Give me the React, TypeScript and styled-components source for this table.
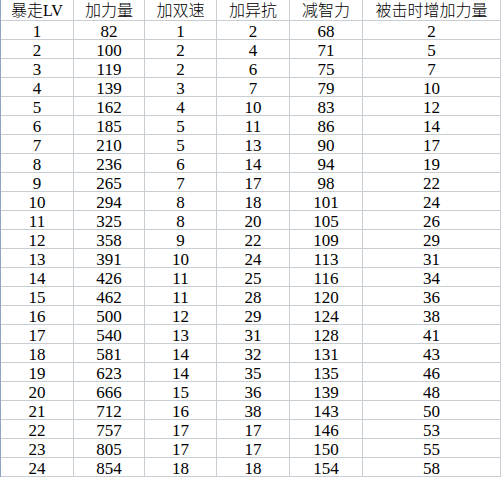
import styled, { createGlobalStyle } from "styled-components";

const GlobalStyle = createGlobalStyle`
  html, body {
    margin: 0;
    padding: 0;
    background: #ffffff;
  }
`;

const Sheet = styled.div`
  display: grid;
  grid-template-columns: 73px 71px 72px 73px 73px 138px;
  grid-template-rows: 21px;
  grid-auto-rows: 19px;
  width: 501px;
  border-left: 1px solid #8fa3c6;
  box-sizing: border-box;
  color: #000;
  font-family: "Liberation Serif", "Noto Sans CJK SC", serif;
`;

const Row = styled.div`
  display: contents;
`;

const Cell = styled.div<{ $head?: boolean }>`
  box-sizing: border-box;
  height: ${(p) => (p.$head ? "21px" : "19px")};
  border-right: 1px solid #c9cdd4;
  border-bottom: 1px solid #c9cdd4;
  display: flex;
  align-items: center;
  justify-content: center;
  padding-top: ${(p) => (p.$head ? "1px" : "2px")};
  white-space: nowrap;
  line-height: 1;
  font-size: ${(p) => (p.$head ? "16px" : "17px")};
  font-weight: ${(p) => (p.$head ? 300 : 400)};
`;

const headers = ["暴走LV", "加力量", "加双速", "加异抗", "减智力", "被击时增加力量"];

const rows: number[][] = [
  [1, 82, 1, 2, 68, 2],
  [2, 100, 2, 4, 71, 5],
  [3, 119, 2, 6, 75, 7],
  [4, 139, 3, 7, 79, 10],
  [5, 162, 4, 10, 83, 12],
  [6, 185, 5, 11, 86, 14],
  [7, 210, 5, 13, 90, 17],
  [8, 236, 6, 14, 94, 19],
  [9, 265, 7, 17, 98, 22],
  [10, 294, 8, 18, 101, 24],
  [11, 325, 8, 20, 105, 26],
  [12, 358, 9, 22, 109, 29],
  [13, 391, 10, 24, 113, 31],
  [14, 426, 11, 25, 116, 34],
  [15, 462, 11, 28, 120, 36],
  [16, 500, 12, 29, 124, 38],
  [17, 540, 13, 31, 128, 41],
  [18, 581, 14, 32, 131, 43],
  [19, 623, 14, 35, 135, 46],
  [20, 666, 15, 36, 139, 48],
  [21, 712, 16, 38, 143, 50],
  [22, 757, 17, 17, 146, 53],
  [23, 805, 17, 17, 150, 55],
  [24, 854, 18, 18, 154, 58],
];

export default function App() {
  return (
    <>
      <GlobalStyle />
      <Sheet>
        <Row>
          {headers.map((h) => (
            <Cell $head key={h}>
              {h}
            </Cell>
          ))}
        </Row>
        {rows.map((r) => (
          <Row key={r[0]}>
            {r.map((v, i) => (
              <Cell key={i}>{v}</Cell>
            ))}
          </Row>
        ))}
      </Sheet>
    </>
  );
}
